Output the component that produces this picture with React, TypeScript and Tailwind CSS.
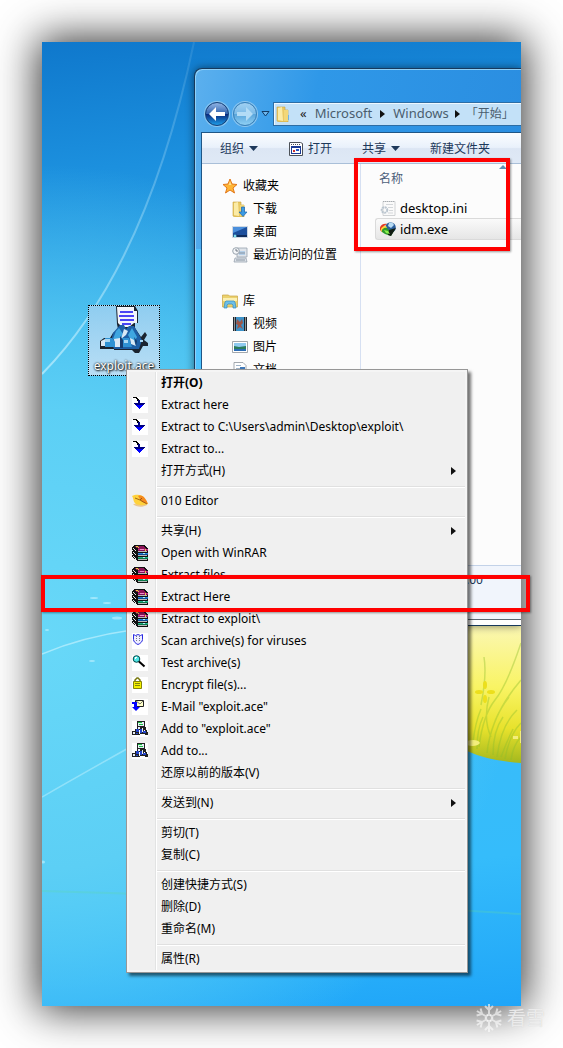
import type { ReactNode } from "react";

type IconProps = { className?: string };

function Art({ children, className = "size-4", box = "0 0 16 16" }: { children: ReactNode; className?: string; box?: string }) {
  return <svg viewBox={box} className={`${className} shrink-0`} aria-hidden="true">{children}</svg>;
}

function ExtractIcon() {
  return (
    <Art>
      <path fill="#fff" d="M0 0h16v16H0z" />
      <g shapeRendering="crispEdges">
        <path fill="#000" d="M0 1h1v-1h4v1h1v1h1v1h1v3H6V4H5V2H4V1z" />
        <path fill="#000080" d="M6 3h2v3h5v1h-1v1h-1v1H4V8H3V7H2V6h4z" />
        <path fill="#00f" d="M4 8h7v1h-1v1H9v1H8v1H7v-1H6v-1H5V9H4z" />
      </g>
    </Art>
  );
}

function LeafIcon() {
  return (
    <Art>
      <path fill="#e8a030" d="M1 11c3 3 9 4 14 1l-2-2z" opacity=".5" />
      <path fill="#ffd23c" d="M0 3c4-2 11-2 13 3l3 5c-3 1-8 2-12 0C1 9 2 6 0 3z" />
      <path fill="#f58a1e" d="M6 3c5-2 8 3 10 8l-6-2z" />
      <path fill="none" stroke="#8a4b10" strokeWidth=".8" d="M3 5l5 2 7 4M8 7l2-2" />
    </Art>
  );
}

function RarIcon() {
  return (
    <Art>
      <g shapeRendering="crispEdges">
        <path fill="#111" d="M2 0h11v1h1v1h1v1h1v13H5v-1H4v-1H2v-1H1v-1H0v-2h1V9H0V6h1V5H0V2h1V1h1z" />
        <path fill="#8c1458" d="M3 1h9v1h1v1h1v1H6V3H4V2H3z" />
        <path fill="#c8248c" d="M6 4h10v1H6z" />
        <path fill="#f08cc8" d="M8 4h4v1H8z" />
        <path fill="#84105c" d="M6 5h10v1H6z" />
        <path fill="#2484dc" d="M6 8h10v1H6z" />
        <path fill="#0c4a94" d="M6 9h10v1H6z" />
        <path fill="#20b488" d="M6 12h10v1H6z" />
        <path fill="#087848" d="M6 13h10v1H6z" />
        <path fill="#e8e8e8" d="M1 3h1v1h1v1h1v1H3V5H2V4H1zM1 7h1v1h1v1h1v1H3V9H2V8H1zM1 11h1v1h1v1h1v1H3v-1H2v-1H1z" />
        <path fill="#b8b8b8" d="M6 6h9v1H6zM6 10h9v1H6zM6 14h9v1H6z" />
        <path fill="#e8d83c" d="M4 1h2v1H4zM6 2h1v1H6zM13 4h1v2h-1z" />
        <path fill="#b4f0fc" d="M11 8h2v1h-2zM11 12h2v1h-2z" />
      </g>
    </Art>
  );
}

function ShieldIcon() {
  return (
    <Art>
      <path fill="#fff" d="M0 0h16v16H0z" />
      <path fill="#eef" stroke="#2a2ae0" d="M1.500 1.500l2 1 2.500-1 2.500 1 2-1v5c0 2-2 4-4.500 5-2.500-1-4.500-3-4.500-5z" />
      <path fill="none" stroke="#778" strokeDasharray="1 1" d="M4.500 3v6M7.500 3v6" />
    </Art>
  );
}

function MagnifierIcon() {
  return (
    <Art>
      <path fill="#fff" d="M0 0h16v16H0z" />
      <circle cx="4.500" cy="4" r="3.300" fill="#4fe6e6" stroke="#004848" />
      <path fill="#fff" d="M3 2h2v1H4v1H3z" />
      <path stroke="#000" strokeWidth="2" d="M7 6.500l5.500 5" />
    </Art>
  );
}

function LockIcon() {
  return (
    <Art>
      <path fill="#fff" d="M0 0h16v16H0z" />
      <path fill="none" stroke="#76760c" strokeWidth="1.500" d="M3 5V3l2-2h1l2 2v2" />
      <path fill="#f4f000" stroke="#85850a" d="M1.500 4.500h8v7h-8z" />
      <path stroke="#85850a" d="M3 6.500h5M3 8.500h5" />
    </Art>
  );
}

function MailIcon() {
  return (
    <Art>
      <path fill="#fff" d="M0 0h16v16H0z" />
      <path fill="#ffffc8" stroke="#222" d="M3.500 1.500h8v6h-8z" />
      <path fill="none" stroke="#555" strokeWidth=".8" d="M4 2l4 3 3-3" />
      <path fill="#00f" d="M0 3h5v5h3l-4 4-4-4h2V5H0z" />
    </Art>
  );
}

function AddIcon() {
  return (
    <Art>
      <path fill="#fff" d="M0 0h16v16H0z" />
      <g shapeRendering="crispEdges">
        <path fill="#222" d="M5 0h8v6h1v3h1v2h1v3h-3v-1H8v1H0v-4h3V8h2V5z" />
        <path fill="#e8eef8" d="M6 1h6v4H6zM6 6h2v2H6zM10 7h1v4h-1zM1 11h2v2H1z" />
        <path fill="#18c040" d="M6 1h4v1H6zM7 3h4v1H7z" />
        <path fill="#2444c8" d="M4 8h3v3H4zM8 8h2v4H8zM11 10h3v2h-3zM4 12h2v1H4z" />
        <path fill="#fff" d="M7 9h1v4H7zM12 9h1v1h-1z" />
      </g>
    </Art>
  );
}

function AceIcon({ className }: IconProps) {
  return (
    <Art className={className} box="0 0 48 48">
      <path fill="#1a2430" d="M16 0h19l3 5v12h-3v5l6 9 4-5 2 3-3 5 4 3v3h-5l-4 7h-4l-3-3H14v-1H0v-8l4-3h6l3-5 5-4-1-5z" />
      <path fill="#f2f4fa" d="M17 1h17v4h3v12h-3l-5 4h-7l-4-4z" />
      <path stroke="#4a44f4" strokeWidth="2" d="M20 6h13M19 10h15M20 14h14M22 18h9" />
      <path fill="#1d5fa6" d="M13 27l7-8h4l2 4 3-3h5l8 14-3 9H14l-3-8z" />
      <path fill="#3fa6e0" d="M16 25l3-3 4 6-5 8-5-3zM32 22l5 9-4 7-5-9z" />
      <path fill="#d9e9f6" d="M24 23l4 2-2 4-5 4zM1 35l4-2v7H1zM14 33l6-1 3 9h-8zM30 32l4 2 2 6-5-2z" />
      <path fill="#2f92d4" d="M5 32h7l3 4v5H5zM22 32h7l3 9H22z" />
      <path fill="#a8d8f4" d="M5 33h5v3H5zM24 34h4v3h-4zM40 34h3v2h-3z" />
      <path fill="#153d70" d="M20 30l3 4v8h-3zM34 31l3 4-1 5z" />
    </Art>
  );
}

function Star() {
  return (
    <Art>
      <path fill="#ffb636" stroke="#e0761a" strokeLinejoin="round" d="M8 1l2 5 5 .5-4 3.500 1.500 5L8 12l-4.500 3L5 10 1 6.500 6 6z" />
      <path fill="#ffe08a" d="M8 3l1.300 4H6.700z" />
    </Art>
  );
}

function FolderArt() {
  return (
    <>
      <path fill="#e9c964" stroke="#c9a23e" strokeWidth=".6" d="M1 1h8v3h3v12H3l-2-1z" />
      <path fill="#fbeba6" d="M2 2l4-1 1 14-5-1z" />
      <path fill="#f2d778" d="M8 4h4v11H8z" />
    </>
  );
}

function FolderIcon({ className }: IconProps) {
  return <Art className={className}><FolderArt /><path fill="#6fb4e4" d="M12 9h1v5h-1z" /></Art>;
}

function DownloadsIcon() {
  return (
    <Art>
      <FolderArt />
      <path fill="#3a9be4" stroke="#1c64ae" strokeWidth=".7" d="M9.500 6h3v5H15l-4 4.500L7 11h2.500z" />
    </Art>
  );
}

function DesktopIcon() {
  return (
    <Art>
      <path fill="#cfd8e2" d="M0 2h16v12H0z" />
      <path fill="#1d4f9c" d="M1 3h14v10H1z" />
      <path fill="#4b8fdc" d="M1 3h14L1 9z" />
      <path fill="#0f2c5c" d="M1 11h14v2H1z" />
      <circle cx="3" cy="12" r="1.500" fill="#7fe0f0" />
    </Art>
  );
}

function RecentIcon() {
  return (
    <Art>
      <path fill="#dfe4ea" stroke="#98a2ae" strokeWidth=".8" d="M5 1h10v9H5zM3 11h11l1 4H2z" />
      <path fill="#b4cfe8" d="M7 4h6v4H7z" />
      <path stroke="#8793a0" d="M4 13h9M7 6h6" />
      <circle cx="4" cy="4" r="3.300" fill="#f4f6f8" stroke="#9aa4ae" />
      <path fill="none" stroke="#56616c" strokeWidth=".8" d="M4 2v2h2" />
    </Art>
  );
}

function LibraryIcon() {
  return (
    <Art>
      <path fill="#ecd26e" stroke="#c8a544" strokeWidth=".7" d="M.5 2h6l1 1h8v11H.5z" />
      <path fill="#fbf0b2" d="M1 5h14v3H1z" />
      <path fill="#6ebfe8" stroke="#338bbd" strokeWidth=".7" d="M2 15l1-6 1-1h8l1 1 1 6h-3v-3l-1-1H6l-1 1v3z" />
    </Art>
  );
}

function VideoIcon() {
  return (
    <Art>
      <path fill="#20262c" d="M1 1h14v14H1z" />
      <path fill="#3d92c8" d="M4 1h8v14H4z" />
      <path fill="#9c5648" d="M5 3l3 3 2-3 1 4-2 2 2 4-3-2-3 2 1-4-2-1z" />
      <path stroke="#fff" strokeDasharray="1 1" d="M2.500 1.500v13M13.500 1.500v13" />
    </Art>
  );
}

function PictureIcon() {
  return (
    <Art>
      <path fill="#fff" stroke="#8c9298" strokeWidth=".8" d="M.5 2.500h15v11H.5z" />
      <path fill="#8fcaf0" d="M2 4h12v8H2z" />
      <path fill="#2a7c5c" d="M2 7l5 1 7-1v3l-12 1z" />
      <path fill="#2c6cb4" d="M2 10h12v2H2z" />
    </Art>
  );
}

function DocumentIcon() {
  return (
    <Art>
      <path fill="#fff" stroke="#8d949c" strokeWidth=".8" d="M2 .5h9l3 3v12H2z" />
      <path stroke="#9fb4c8" d="M4 3.500h5M4 6.500h8M4 9.500h8" />
      <path fill="#3f78b8" d="M8 5h5v4H8z" />
    </Art>
  );
}

function OpenIcon() {
  return (
    <Art>
      <path fill="#fff" stroke="#4c5158" d="M1.500 1.500h11l2 1v12h-13z" />
      <path fill="#1a3a94" d="M3 5h10v2H3zM3 7h1v5H3zM12 7h1v5h-1zM3 12h10v1H3z" />
      <path fill="#d03030" d="M5 9h2v2H5z" />
      <path fill="#2450c0" d="M8 8h3v2H8z" />
      <path stroke="#4c5158" strokeDasharray="1 1" d="M3 3.500h9" />
    </Art>
  );
}

function IniIcon() {
  return (
    <Art>
      <path fill="#fafafa" stroke="#c6c9cc" strokeWidth=".8" d="M3 1.500h12v14H3z" />
      <path stroke="#a8acb0" strokeDasharray="1 1" d="M3 1.500h12" />
      <path stroke="#d4d7da" d="M6 4.500h7M8 7.500h5M9 10.500h4M8 13h5" />
      <circle cx="4.500" cy="10" r="2.800" fill="none" stroke="#b9c4ce" strokeWidth="2" strokeDasharray="2 .6" />
    </Art>
  );
}

function IdmIcon() {
  return (
    <Art>
      <circle cx="10.500" cy="6.500" r="5.300" fill="#2c5f9c" />
      <path fill="#b8dcf4" d="M9 2c3-1 4 0 5 2l-3 3-3-2z" />
      <path fill="#e23c24" d="M0 9c-1-4 3-7 7-6L4 5 2 11z" />
      <path fill="#ffd43a" d="M1 10c-1-3 2-5 5-5l1 2-3 5z" />
      <path fill="#2d9a2d" d="M2 11c-1-3 3-5 5-4l2 2 6-1-4 7-6-2z" />
      <path fill="#111c14" d="M9 9l7-2-5 8-3-1z" />
      <path fill="#8ef04c" d="M4 9l4 1 2 3-4-1z" />
    </Art>
  );
}

function Caret() {
  return <Art className="h-[5px] w-[9px]" box="0 0 9 5"><path fill="#1e395b" d="M0 0h9L4.500 5z" /></Art>;
}

function Chevron() {
  return <Art className="h-2 w-[5px]" box="0 0 5 8"><path fill="#111" d="M0 0l5 4-5 4z" /></Art>;
}

function NavButtons() {
  return (
    <div className="flex items-center gap-1">
      <button aria-label="后退" className="size-6 rounded-full border border-[#1a3f74] bg-[linear-gradient(#8fb4e4_0%,#3566b0_48%,#0a2c80_52%,#1c9ce8_100%)] ring-1 ring-[#8ec6ee]">
        <svg viewBox="0 0 22 22"><path fill="#fff" d="M3 11l7-7v5h9v4h-9v5z" /></svg>
      </button>
      <button aria-label="前进" className="size-6 rounded-full border border-[#3c7fb4] bg-[linear-gradient(#9fd0f2_0%,#7dbce8_48%,#5aa6dc_52%,#8fd0f4_100%)] ring-1 ring-[#8ec6ee]">
        <svg viewBox="0 0 22 22"><path fill="#b3dcf6" d="M19 11l-7-7v5H3v4h9v5z" /></svg>
      </button>
      <button aria-label="历史记录">
        <svg viewBox="0 0 9 6" className="h-[6px] w-[9px]"><path fill="#6fb8ee" stroke="#123c66" d="M1 .5h7L4.500 5z" /></svg>
      </button>
    </div>
  );
}

const favorites = [
  { label: "下载", icon: <DownloadsIcon /> },
  { label: "桌面", icon: <DesktopIcon /> },
  { label: "最近访问的位置", icon: <RecentIcon /> },
];

const libraries = [
  { label: "视频", icon: <VideoIcon /> },
  { label: "图片", icon: <PictureIcon /> },
  { label: "文档", icon: <DocumentIcon /> },
];

function TreeGroup({ label, icon, items }: { label: string; icon: ReactNode; items: typeof favorites }) {
  return (
    <section className="pl-5">
      <a href="#" className="flex h-[23px] items-center gap-[5px]">{icon}{label}</a>
      <ul className="pl-[10px]">
        {items.map(i => (
          <li key={i.label}><a href="#" className="flex h-[23px] items-center gap-[5px]">{i.icon}{i.label}</a></li>
        ))}
      </ul>
    </section>
  );
}

function Explorer() {
  return (
    <section className="absolute top-[26px] right-0 left-[152px] flex h-[558px] flex-col overflow-hidden rounded-tl-lg border-y border-l border-[#17395c] bg-[#50c4ff] bg-[linear-gradient(100deg,#5cb0ee_0%,#2f98e8_35%,#2a8de0_100%)] bg-[length:100%_180px] bg-no-repeat pl-1.5 whitespace-nowrap shadow-[inset_1px_1px_0_#8fd0f8,0_0_8px_rgba(0,0,0,0.5)]">
      <header className="flex h-[63px] items-end pb-1.5 pl-1">
        <NavButtons />
        <nav className="ml-[3px] flex h-6 flex-1 items-center border-y border-l border-[#2d6da4] bg-[#c3e1f8] pl-[2px] text-[13px] text-[#4a5d6e] shadow-[inset_1px_1px_0_#eef8ff]">
          <FolderIcon />
          <span className="ml-2 text-[#222]">«</span>
          <a href="#" className="ml-2">Microsoft</a>
          <span className="mx-2"><Chevron /></span>
          <a href="#">Windows</a>
          <span className="mx-1.5"><Chevron /></span>
          <a href="#" className="text-xs">「开始」</a>
        </nav>
      </header>
      <div className="flex flex-1 flex-col border-t border-l border-[#1f5686] bg-[#fcfcfc]">
        <div className="flex h-[31px] items-center border-b border-[#a9bfd8] bg-[linear-gradient(#fbfdff_0%,#e9f1fb_48%,#dce6f4_52%,#dfe9f6_100%)] pt-px pl-[18px] text-[#1e395b]">
          <button className="flex items-center gap-[5px]">组织<Caret /></button>
          <button className="ml-[30px] flex items-center gap-1"><OpenIcon />打开</button>
          <button className="ml-[30px] flex items-center gap-[5px]">共享<Caret /></button>
          <button className="ml-[30px]">新建文件夹</button>
        </div>
        <div className="flex flex-1">
          <aside className="flex w-[159px] shrink-0 flex-col gap-[23px] border-r border-[#d6e0f2] pt-[10px]">
            <TreeGroup label="收藏夹" icon={<Star />} items={favorites} />
            <TreeGroup label="库" icon={<LibraryIcon />} items={libraries} />
          </aside>
          <div className="relative flex-1 pl-[14px]">
            <svg viewBox="0 0 8 4" className="absolute top-px left-[138px] h-1 w-2"><path fill="#5c8fb4" d="M4 0l4 4H0z" /></svg>
            <table className="w-full border-separate border-spacing-0">
              <thead>
                <tr><th className="h-[33px] p-0 pb-[3px] pl-1 text-left font-normal text-[#4c607a]">名称</th></tr>
              </thead>
              <tbody className="text-[13px] leading-5">
                <tr>
                  <td className="h-[21px] p-0 pl-[5px]"><span className="flex items-center gap-1"><IniIcon />desktop.ini</span></td>
                </tr>
                <tr>
                  <td className="h-[22px] rounded-l-[3px] border-y border-l border-[#dadada] bg-[linear-gradient(#fafafa,#e6e6e6)] p-0 pl-1"><span className="flex items-center gap-1"><IdmIcon />idm.exe</span></td>
                </tr>
              </tbody>
            </table>
          </div>
        </div>
        <footer className="h-[54px] border-t border-[#c3d2e8] bg-[#f1f5fc] pt-1.5 pl-[264px] leading-4 text-[#1e395b]">:00</footer>
        <div className="h-[6px] border-t border-[#5c6670] bg-white" />
      </div>
    </section>
  );
}

function Wallpaper() {
  return (
    <>
      <div className="absolute inset-0 bg-[radial-gradient(circle_at_0%_62%,#68d8f8_0%,#5ccff5_30%,rgba(70,190,245,0)_62%),linear-gradient(174deg,#0f78cc_0%,#1c90de_13%,#38b0ea_32%,#3cbcf8_60%,#35bcfb_85%,#1fa5f8_100%)]" />
      <svg viewBox="0 0 479 964" preserveAspectRatio="none" className="absolute inset-0 size-full" fill="none" aria-hidden="true">
        <defs>
          <linearGradient id="ray" x1="0" y1="1" x2="1" y2="0">
            <stop offset="0" stopColor="#d8f6ff" stopOpacity=".6" />
            <stop offset="1" stopColor="#d8f6ff" stopOpacity=".1" />
          </linearGradient>
        </defs>
        <path d="M0 332Q105 225 152 0" stroke="url(#ray)" strokeWidth="2" />
        <path d="M0 612Q40 595 90 588" stroke="#d8f8ff" strokeWidth="1.500" opacity=".55" />
        <path d="M0 755Q40 732 90 704" stroke="#d8f8ff" strokeWidth="1.500" opacity=".4" />
        <path d="M0 849Q200 854 479 872" stroke="#5cd8b0" strokeWidth="2" opacity=".3" />
        <g fill="#c8f4ff" opacity=".6">
          <ellipse cx="75" cy="576" rx="5" ry="1.500" />
          <ellipse cx="65" cy="561" rx="4" ry="1" />
          <ellipse cx="52" cy="556" rx="4" ry="1" />
          <ellipse cx="50" cy="619" rx="3" ry="1" />
          <ellipse cx="5" cy="588" rx="2" ry="1" />
          <ellipse cx="1" cy="820" rx="2" ry="1.500" />
        </g>
      </svg>
      <svg viewBox="0 0 54 138" className="absolute top-[583px] right-0 h-[138px] w-[54px]" fill="none" aria-hidden="true">
        <defs>
          <linearGradient id="meadow" x1="0" y1="0" x2="0" y2="1">
            <stop offset="0" stopColor="#fbf7b4" />
            <stop offset=".45" stopColor="#f9f464" />
            <stop offset=".75" stopColor="#e8e22c" />
            <stop offset="1" stopColor="#a4b81e" />
          </linearGradient>
        </defs>
        <path d="M0 0h54v138Q22 136 0 126z" fill="url(#meadow)" />
        <g stroke="#8fbf2c" strokeWidth="1.500" opacity=".4">
          <path d="M54 18Q40 60 28 75T12 122M20 128Q24 90 54 55M30 132Q34 100 50 85M6 118Q8 98 14 84M38 134Q42 110 54 98M14 80Q20 50 17 32M24 112Q16 95 22 72M44 135Q46 120 54 112M28 96Q34 82 42 72M10 124Q10 104 16 92M26 130Q26 106 36 92M34 132Q40 116 46 104" />
        </g>
        <g fill="#ecdf1c">
          <ellipse cx="18" cy="60" rx="2" ry="4" /><ellipse cx="18" cy="74" rx="2" ry="4" />
          <ellipse cx="12" cy="67" rx="4" ry="2" /><ellipse cx="24" cy="67" rx="4" ry="2" />
        </g>
        <path d="M0 116c6-2 12-1 13 2-2 3-8 4-13 2zM46 111h5v3h-5zM53 106h1v12h-1z" fill="#f3ee7c" />
      </svg>
    </>
  );
}

type MenuEntry = { label: string; icon?: ReactNode; bold?: boolean; submenu?: boolean };

const menuGroups: MenuEntry[][] = [
  [
    { label: "打开(O)", bold: true },
    { label: "Extract here", icon: <ExtractIcon /> },
    { label: "Extract to C:\\Users\\admin\\Desktop\\exploit\\", icon: <ExtractIcon /> },
    { label: "Extract to...", icon: <ExtractIcon /> },
    { label: "打开方式(H)", submenu: true },
  ],
  [{ label: "010 Editor", icon: <LeafIcon /> }],
  [
    { label: "共享(H)", submenu: true },
    { label: "Open with WinRAR", icon: <RarIcon /> },
    { label: "Extract files...", icon: <RarIcon /> },
    { label: "Extract Here", icon: <RarIcon /> },
    { label: "Extract to exploit\\", icon: <RarIcon /> },
    { label: "Scan archive(s) for viruses", icon: <ShieldIcon /> },
    { label: "Test archive(s)", icon: <MagnifierIcon /> },
    { label: "Encrypt file(s)...", icon: <LockIcon /> },
    { label: "E-Mail \"exploit.ace\"", icon: <MailIcon /> },
    { label: "Add to \"exploit.ace\"", icon: <AddIcon /> },
    { label: "Add to...", icon: <AddIcon /> },
    { label: "还原以前的版本(V)" },
  ],
  [{ label: "发送到(N)", submenu: true }],
  [{ label: "剪切(T)" }, { label: "复制(C)" }],
  [{ label: "创建快捷方式(S)" }, { label: "删除(D)" }, { label: "重命名(M)" }],
  [{ label: "属性(R)" }],
];

function ContextMenu() {
  return (
    <div role="menu" className="relative mt-[327px] mb-[33px] ml-[84px] w-[342px] border border-[#979797] bg-[#f0f0f0] bg-[linear-gradient(90deg,transparent_28px,#e2e3e3_28px,#e2e3e3_29px,#fff_29px,#fff_30px,transparent_30px)] py-[2px] shadow-[inset_0_0_0_2px_#f5f5f5,3px_3px_3px_rgba(0,0,0,0.55)]">
      {menuGroups.map((group, g) => (
        <div key={g} role="group">
          {g > 0 && <div role="separator" className="mt-1 mr-[2px] mb-[2px] ml-[30px] h-[2px] border-b border-white bg-[#e0e0e0]" />}
          {group.map(item => (
            <button key={item.label} role="menuitem" className="flex h-[22px] w-full items-center pl-[5px] text-left text-black">
              <span className="w-[29px] shrink-0">{item.icon}</span>
              <span className={item.bold ? "flex-1 font-bold" : "flex-1"}>{item.label}</span>
              {item.submenu && <span className="mr-[11px]"><Chevron /></span>}
            </button>
          ))}
        </div>
      ))}
    </div>
  );
}

function Watermark() {
  return (
    <div className="absolute right-[18px] bottom-4 flex items-center gap-1 text-[19px] leading-7 text-white/60 [text-shadow:0_0_1px_#ccc]">
      <svg viewBox="-14 -14 28 28" className="size-7" fill="none" stroke="currentColor" strokeWidth="2" aria-hidden="true">
        {[0, 60, 120, 180, 240, 300].map(a => (
          <path key={a} transform={`rotate(${a})`} d="M0-3V-14M-4-12l4 4 4-4M-2-3h4" />
        ))}
      </svg>
      <span>看雪</span>
    </div>
  );
}

export default function App() {
  return (
    <main className="relative flex min-h-screen overflow-hidden bg-white p-[42px] font-['Noto_Sans','Noto_Sans_CJK_SC',sans-serif] text-xs text-black">
      <div className="relative flex-1 shadow-[0_0_40px_4px_rgba(0,0,0,0.8)]">
        <div className="relative overflow-hidden">
          <Wallpaper />
          <Explorer />
          <button className="absolute top-[263px] left-[46px] flex h-[71px] w-[72px] flex-col items-center border border-dotted border-black bg-[linear-gradient(#8fcdf0,#b9def5)]">
            <AceIcon className="size-12" />
            <span className="mt-1 leading-4 text-white [text-shadow:1px_1px_2px_#000,0_0_2px_#000]">exploit.ace</span>
          </button>
          <ContextMenu />
        </div>
        <div className="absolute top-[116px] left-[312px] h-[93px] w-[156px] border-4 border-[#ff0000] shadow-[1px_1px_2px_rgba(0,0,0,0.4)]" />
        <div className="absolute top-[533px] -right-[9px] -left-px h-[37px] border-4 border-[#ff0000] shadow-[1px_1px_2px_rgba(0,0,0,0.4)]" />
      </div>
      <Watermark />
    </main>
  );
}
